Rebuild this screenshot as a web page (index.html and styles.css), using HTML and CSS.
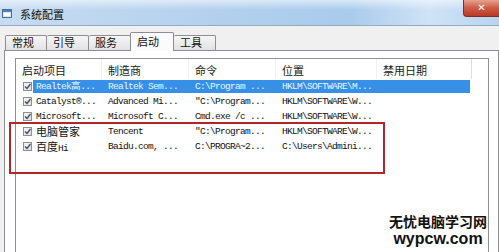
FILE: index.html
```html
<!DOCTYPE html>
<html lang="zh-CN">
<head>
  <meta charset="UTF-8">
  <title>系统配置</title>
  <link rel="stylesheet" href="styles.css">
</head>
<body>

  <div class="window">
    <div class="titlebar">
      <svg class="app-icon" width="10" height="9" viewBox="0 0 10 9">
        <rect x="0.5" y="0.5" width="9" height="8" fill="#dbe8f5" stroke="#4a6d96"/>
        <rect x="1" y="1" width="8" height="2" fill="#4f7fbf"/>
        <rect x="2" y="4" width="6" height="3" fill="#fff"/>
      </svg>
      <span class="title">系统配置</span>
      <div class="close-btn">✕</div>
    </div>

    <div class="main">
      <div class="tabs">
        <div class="tab">常规</div>
        <div class="tab">引导</div>
        <div class="tab">服务</div>
        <div class="tab active">启动</div>
        <div class="tab">工具</div>
      </div>

      <div class="panel">
        <div class="list">
          <div class="list-header">
            <div class="hcell c1">启动项目</div>
            <div class="hcell c2">制造商</div>
            <div class="hcell c3">命令</div>
            <div class="hcell c4">位置</div>
            <div class="hcell c5">禁用日期</div>
            <div class="hcell rest"></div>
          </div>

          <div class="row">
            <span class="check"><svg width="7" height="7" viewBox="0 0 7 7"><polyline points="1,3.5 3,5.5 6.5,1" fill="none" stroke="#3c4f6e" stroke-width="1.4"/></svg></span>
            <div class="row-main selected">
              <div class="cell first">Realtek高...</div>
              <div class="cell">Realtek Sem...</div>
              <div class="cell">C:\Program ...</div>
              <div class="cell">HKLM\SOFTWARE\M...</div>
              <div class="cell last"></div>
            </div>
          </div>

          <div class="row">
            <span class="check"><svg width="7" height="7" viewBox="0 0 7 7"><polyline points="1,3.5 3,5.5 6.5,1" fill="none" stroke="#3c4f6e" stroke-width="1.4"/></svg></span>
            <div class="row-main">
              <div class="cell first">Catalyst®...</div>
              <div class="cell">Advanced Mi...</div>
              <div class="cell">"C:\Program...</div>
              <div class="cell">HKLM\SOFTWARE\W...</div>
              <div class="cell last"></div>
            </div>
          </div>

          <div class="row">
            <span class="check"><svg width="7" height="7" viewBox="0 0 7 7"><polyline points="1,3.5 3,5.5 6.5,1" fill="none" stroke="#3c4f6e" stroke-width="1.4"/></svg></span>
            <div class="row-main">
              <div class="cell first">Microsoft...</div>
              <div class="cell">Microsoft C...</div>
              <div class="cell">Cmd.exe /c ...</div>
              <div class="cell">HKLM\SOFTWARE\W...</div>
              <div class="cell last"></div>
            </div>
          </div>

          <div class="row">
            <span class="check"><svg width="7" height="7" viewBox="0 0 7 7"><polyline points="1,3.5 3,5.5 6.5,1" fill="none" stroke="#3c4f6e" stroke-width="1.4"/></svg></span>
            <div class="row-main">
              <div class="cell first"><span class="cjk">电脑管家</span></div>
              <div class="cell">Tencent</div>
              <div class="cell">"C:\Program...</div>
              <div class="cell">HKLM\SOFTWARE\W...</div>
              <div class="cell last"></div>
            </div>
          </div>

          <div class="row">
            <span class="check"><svg width="7" height="7" viewBox="0 0 7 7"><polyline points="1,3.5 3,5.5 6.5,1" fill="none" stroke="#3c4f6e" stroke-width="1.4"/></svg></span>
            <div class="row-main">
              <div class="cell first"><span class="cjk">百度</span>Hi</div>
              <div class="cell">Baidu.com, ...</div>
              <div class="cell">C:\PROGRA~2...</div>
              <div class="cell">C:\Users\Admini...</div>
              <div class="cell last"></div>
            </div>
          </div>
        </div>
      </div>
    </div>

    <div class="mark-box"></div>

    <div class="watermark">
      <div class="wm-cn">无忧电脑学习网</div>
      <div class="wm-en">wypcw.com</div>
    </div>
  </div>

</body>
</html>
```

FILE: styles.css
```css
body {
  margin: 0;
  overflow: hidden;
  background-color: #fff;
  font-family: "Noto Sans CJK SC", "Noto Sans", sans-serif;
}
.window {
  position: relative;
  width: 499px;
  height: 252px;
  overflow: hidden;
  background-color: #f0f0f0;
}
.titlebar {
  height: 25px;
  display: flex;
  align-items: center;
  border-bottom: 1px solid #93aac4;
  background: linear-gradient(to bottom, rgba(255,255,255,0.55), rgba(255,255,255,0) 40%),
              linear-gradient(to right, #c7dcf1, #b2d0ee 45%, #a9cbec 70%, #cfe3f6 86%, #b7d4ef);
}
.app-icon {
  margin-left: 2px;
  margin-top: 2px;
}
.title {
  margin-left: 8px;
  margin-top: 2px;
  font-size: 11px;
  color: #111;
}
.close-btn {
  position: absolute;
  top: 0;
  right: 0;
  width: 36px;
  height: 17px;
  box-sizing: border-box;
  border: 1px solid #8a2a1f;
  border-top: none;
  border-right: none;
  border-radius: 0 0 0 4px;
  background: linear-gradient(to bottom, #e4a28f, #cf5b45 50%, #b83a25);
  color: #fff;
  font-family: "DejaVu Sans", sans-serif;
  font-size: 10px;
  font-weight: bold;
  text-align: center;
  line-height: 15px;
}
.main {
  padding-top: 6px;
}
.tabs {
  display: flex;
  align-items: flex-end;
  height: 18px;
  padding-left: 5px;
}
.tab {
  width: 42px;
  height: 15px;
  box-sizing: border-box;
  padding-left: 6px;
  border: 1px solid #8c8e94;
  border-bottom: none;
  border-left: none;
  border-radius: 2px 2px 0 0;
  background: linear-gradient(to bottom, #f6f6f6, #e2e2e2);
  font-size: 11px;
  line-height: 13px;
  color: #111;
}
.tab:first-child {
  border-left: 1px solid #8c8e94;
}
.tab.active {
  position: relative;
  z-index: 1;
  width: 44px;
  height: 19px;
  margin-bottom: -1px;
  margin-left: -1px;
  border-left: 1px solid #8c8e94;
  background: #fbfbfb;
  line-height: 16px;
}
.panel {
  margin-left: 4px;
  width: 495px;
  height: 210px;
  box-sizing: border-box;
  padding: 7px 0 0 10px;
  border: 1px solid #8c8e94;
  background-color: #fff;
}
.list {
  width: 474px;
  height: 210px;
  box-sizing: border-box;
  border: 1px solid #8e9196;
  background-color: #fff;
}
.list-header {
  display: flex;
  height: 20px;
}
.hcell {
  box-sizing: border-box;
  padding-left: 6px;
  border-right: 1px solid #f0f0f0;
  font-size: 11px;
  line-height: 22px;
  color: #1a1a1a;
}
.c1 { width: 86px; }
.c2 { width: 87px; }
.c3 { width: 87px; }
.c4 { width: 101px; }
.c5 { width: 95px; border-right-color: #dcdcdc; }
.rest { flex: 1; border-right: none; }
.row {
  display: flex;
  align-items: center;
  height: 15px;
  padding-left: 7px;
}
.check {
  display: flex;
  align-items: center;
  justify-content: center;
  width: 9px;
  height: 9px;
  box-sizing: border-box;
  border: 1px solid #8f8f8f;
  background: linear-gradient(to bottom right, #f4f4f4, #dedede);
  margin-right: 1px;
}
.row-main {
  display: flex;
  height: 13px;
  font-family: "Liberation Mono", monospace;
  font-size: 9.5px;
  letter-spacing: -0.7px;
  line-height: 13px;
  color: #111;
}
.row-main.selected {
  background-color: #3790e6;
  color: #e6f6ff;
}
.cell {
  width: 87px;
  box-sizing: border-box;
  padding-left: 6px;
  white-space: nowrap;
}
.cell.first {
  width: 69px;
  padding-left: 3px;
}
.cell:nth-child(4) { width: 101px; }
.cell.last { width: 93px; }
.cjk {
  font-family: "Noto Sans CJK SC", sans-serif;
  font-size: 11px;
  line-height: 13px;
  letter-spacing: 0;
}
.mark-box {
  position: absolute;
  left: 9px;
  top: 122px;
  width: 376px;
  height: 52px;
  box-sizing: border-box;
  border: 2px solid #b0262c;
}
.watermark {
  position: absolute;
  right: 12px;
  top: 213px;
  text-align: center;
  color: #111;
  font-weight: bold;
}
.wm-cn {
  font-family: "Noto Sans CJK SC", sans-serif;
  font-size: 14px;
  line-height: 17px;
}
.wm-en {
  font-family: "Liberation Sans", Arial, sans-serif;
  font-size: 16px;
  line-height: 18px;
}
```
